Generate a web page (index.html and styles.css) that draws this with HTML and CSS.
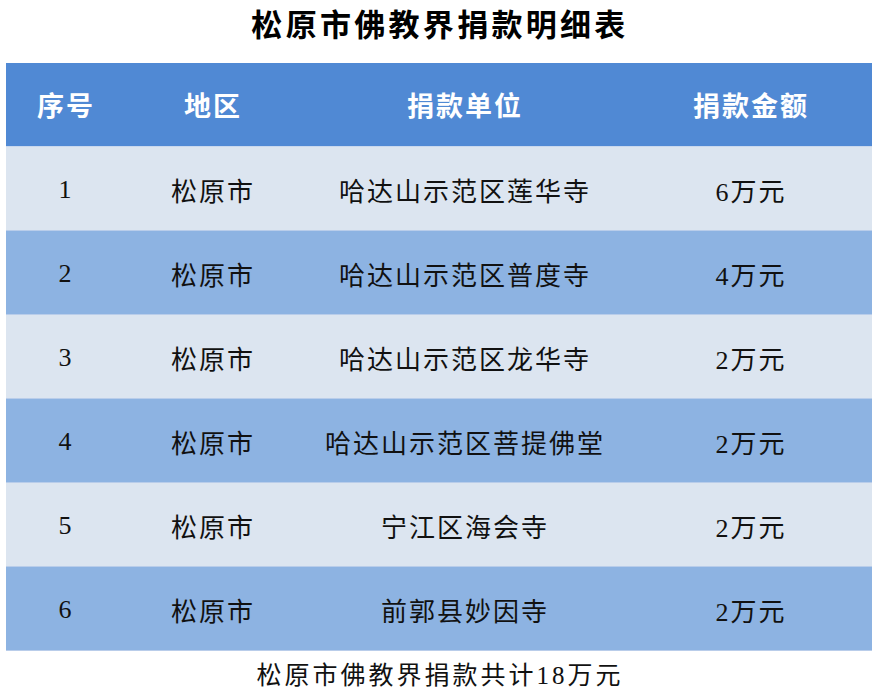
FILE: index.html
```html
<!DOCTYPE html>
<html lang="zh-CN">
<head>
<meta charset="utf-8">
<title>松原市佛教界捐款明细表</title>
<link rel="stylesheet" href="styles.css">
</head>
<body>
<h1 class="title">松原市佛教界捐款明细表</h1>
<table class="sheet">
  <colgroup>
    <col class="c-no"><col class="c-area"><col class="c-unit"><col class="c-amt">
  </colgroup>
  <thead>
    <tr class="head"><th>序号</th><th>地区</th><th>捐款单位</th><th>捐款金额</th></tr>
  </thead>
  <tbody>
    <tr class="light"><td>1</td><td>松原市</td><td>哈达山示范区莲华寺</td><td>6万元</td></tr>
    <tr class="dark"><td>2</td><td>松原市</td><td>哈达山示范区普度寺</td><td>4万元</td></tr>
    <tr class="light"><td>3</td><td>松原市</td><td>哈达山示范区龙华寺</td><td>2万元</td></tr>
    <tr class="dark"><td>4</td><td>松原市</td><td>哈达山示范区菩提佛堂</td><td>2万元</td></tr>
    <tr class="light"><td>5</td><td>松原市</td><td>宁江区海会寺</td><td>2万元</td></tr>
    <tr class="dark"><td>6</td><td>松原市</td><td>前郭县妙因寺</td><td>2万元</td></tr>
  </tbody>
</table>
<p class="total">松原市佛教界捐款共计18万元</p>
</body>
</html>
```
FILE: styles.css
```css
html, body {
  margin: 0;
  padding: 0;
  background: #ffffff;
}
body {
  width: 880px;
  font-family: "Liberation Serif", "Noto Sans CJK SC", serif;
  color: #111111;
}
.title {
  margin: 0 0 17px;
  height: 46px;
  line-height: 46px;
  text-align: center;
  font-family: "Noto Sans CJK SC", sans-serif;
  font-weight: 700;
  font-size: 31px;
  letter-spacing: 3.3px;
  color: #000000;
}
.sheet {
  margin-left: 6px;
  width: 866px;
  border-collapse: collapse;
  table-layout: fixed;
}
.c-no { width: 120px; }
.c-area { width: 174px; }
.c-unit { width: 330px; }
.c-amt { width: 242px; }
.sheet th, .sheet td {
  height: 83px;
  padding: 0;
  text-align: center;
  vertical-align: middle;
}
.head th {
  background: #5089d4;
  color: #ffffff;
  font-family: "Noto Sans CJK SC", sans-serif;
  font-weight: 700;
  font-size: 27px;
  letter-spacing: 2px;
  border-bottom: 1px solid #c9d8ee;
}
.sheet td {
  height: 81px;
  font-size: 26px;
  letter-spacing: 2px;
  font-weight: 400;
  padding-top: 2px;
  border-bottom: 1px solid #b9cdea;
}
.light td { background: #dce5f0; }
.dark td { background: #8db3e2; }
.total {
  margin: 0;
  height: 44px;
  line-height: 50px;
  text-align: center;
  font-size: 25px;
  letter-spacing: 3px;
  color: #111111;
}
```
